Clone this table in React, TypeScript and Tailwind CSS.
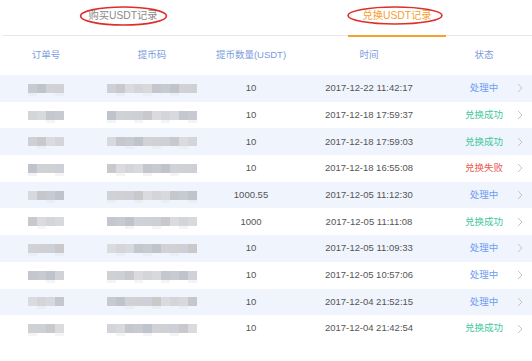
import React from 'react';

type Status = 'pending' | 'ok' | 'fail';

const rows: { amount: string; time: string; status: Status }[] = [
  { amount: '10', time: '2017-12-22 11:42:17', status: 'pending' },
  { amount: '10', time: '2017-12-18 17:59:37', status: 'ok' },
  { amount: '10', time: '2017-12-18 17:59:03', status: 'ok' },
  { amount: '10', time: '2017-12-18 16:55:08', status: 'fail' },
  { amount: '1000.55', time: '2017-12-05 11:12:30', status: 'pending' },
  { amount: '1000', time: '2017-12-05 11:11:08', status: 'ok' },
  { amount: '10', time: '2017-12-05 11:09:33', status: 'pending' },
  { amount: '10', time: '2017-12-05 10:57:06', status: 'pending' },
  { amount: '10', time: '2017-12-04 21:52:15', status: 'pending' },
  { amount: '10', time: '2017-12-04 21:42:54', status: 'ok' },
];

const statusText: Record<Status, string> = { pending: '处理中', ok: '兑换成功', fail: '兑换失败' };
const statusColor: Record<Status, string> = {
  pending: 'text-[#6f9cf0]',
  ok: 'text-[#3fc8a0]',
  fail: 'text-[#ea5a4f]',
};

// grey shades for the pixelated (blurred) cells
const shades = [
  'bg-[#c7cad1]',
  'bg-[#d3d5da]',
  'bg-[#cdd0d6]',
  'bg-[#bfc3cb]',
  'bg-[#d8d9dd]',
  'bg-[#c9c9cc]',
  'bg-[#d0d2d8]',
  'bg-[#c4c7ce]',
  'bg-[#dadbdf]',
  'bg-[#cfd1d5]',
];

function Mosaic({ cells, seed }: { cells: number; seed: number }) {
  return (
    <div className="flex flex-col">
      <div className="flex">
        {Array.from({ length: cells }).map((_, i) => (
          <div key={i} className={`w-[9px] h-[9px] ${shades[(i * 3 + seed) % shades.length]}`} />
        ))}
      </div>
      <div className="flex opacity-40">
        {Array.from({ length: cells }).map((_, i) => (
          <div key={i} className={`w-[9px] h-[3px] ${(i + seed) % 3 === 0 ? 'bg-[#e4e6ea]' : 'bg-transparent'}`} />
        ))}
      </div>
    </div>
  );
}

const grid = 'grid grid-cols-[92px_120px_78px_158px_72px_12px] items-center';

export default function App() {
  return (
    <div className="w-[532px] h-[361px] bg-white overflow-hidden" style={{ fontFamily: '"Liberation Sans", "Noto Sans CJK SC", sans-serif' }}>
      {/* tabs */}
      <div className="relative h-[36px] ml-[2px] border-b border-[#e9e9e9] flex pl-[72px]">
        <div className="w-[98px] h-full pt-[8px] text-center text-[10.3px] leading-[16px] text-[#8a8a8a]">购买USDT记录</div>
        <div className="relative ml-[176px] w-[98px] h-full pt-[8px] text-center text-[10.3px] leading-[16px] text-[#f5a030]">
          兑换USDT记录
          <div className="absolute left-0 right-0 bottom-[-2px] h-[2px] bg-[#f5a030]" />
        </div>
        {/* red annotation circles */}
        <svg className="absolute left-[-2px] top-0 pointer-events-none" width="532" height="36">
          <ellipse cx="123.5" cy="16" rx="43" ry="9" fill="none" stroke="#dd2f2a" strokeWidth="1.6" />
          <ellipse cx="395" cy="15.5" rx="47" ry="8.5" fill="none" stroke="#dd2f2a" strokeWidth="1.6" />
        </svg>
      </div>

      {/* header */}
      <div className={`${grid} h-[39px] text-[9.5px] text-[#7c9be0] text-center`}>
        <div>订单号</div>
        <div>提币码</div>
        <div>提币数量(USDT)</div>
        <div>时间</div>
        <div>状态</div>
        <div />
      </div>

      {/* rows */}
      {rows.map((r, i) => (
        <div key={i} className={`${grid} h-[26.7px] text-[9.5px] text-[#555555] text-center ${i % 2 === 0 ? 'bg-[#eff4fd]' : 'bg-white'}`}>
          <div className="flex justify-center pt-[3px]">
            <Mosaic cells={4} seed={i} />
          </div>
          <div className="flex justify-center pt-[3px]">
            <Mosaic cells={10} seed={i + 2} />
          </div>
          <div>{r.amount}</div>
          <div>{r.time}</div>
          <div className={statusColor[r.status]}>{statusText[r.status]}</div>
          <div className="flex ml-[-3px]">
            <svg width="6" height="10" viewBox="0 0 6 10">
              <polyline points="1,1 5,5 1,9" fill="none" stroke="#c4c4c4" strokeWidth="1" />
            </svg>
          </div>
        </div>
      ))}
    </div>
  );
}
